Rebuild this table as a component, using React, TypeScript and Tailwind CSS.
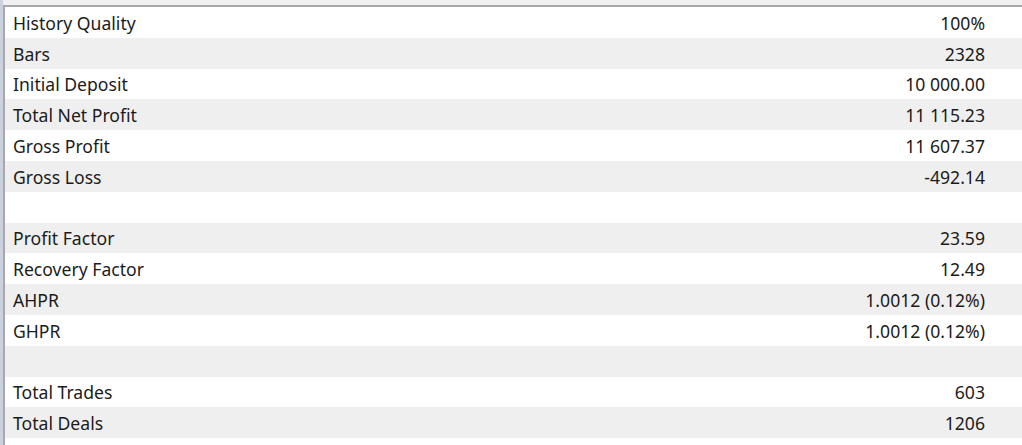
import React from 'react';

const ROWS: [string, string][] = [
  ['History Quality', '100%'],
  ['Bars', '2328'],
  ['Initial Deposit', '10 000.00'],
  ['Total Net Profit', '11 115.23'],
  ['Gross Profit', '11 607.37'],
  ['Gross Loss', '-492.14'],
  ['', ''],
  ['Profit Factor', '23.59'],
  ['Recovery Factor', '12.49'],
  ['AHPR', '1.0012 (0.12%)'],
  ['GHPR', '1.0012 (0.12%)'],
  ['', ''],
  ['Total Trades', '603'],
  ['Total Deals', '1206'],
  ['', ''],
];

export default function App() {
  return (
    <div className="w-[1022px] h-[445px] overflow-hidden bg-[#f0f0f0] flex">
      {/* left edge of the window */}
      <div className="w-[3px] bg-[#c9d2de] shrink-0" />
      <div className="flex-1 flex flex-col pt-[5px]">
        <div className="flex-1 border-t-2 border-l-2 border-[#a8a8a8] bg-white overflow-hidden">
          {ROWS.map(([label, value], i) => (
            <div
              key={i}
              className={`h-[30.8px] flex items-center justify-between pl-[8px] pr-[37px] pt-[1px] text-[17.6px] text-[#1b1b1b] ${i % 2 === 1 ? 'bg-[#efefef]' : 'bg-white'}`}
              style={{ fontFamily: '"Noto Sans", "Open Sans", sans-serif' }}
            >
              <span>{label}</span>
              <span>{value}</span>
            </div>
          ))}
        </div>
      </div>
    </div>
  );
}
